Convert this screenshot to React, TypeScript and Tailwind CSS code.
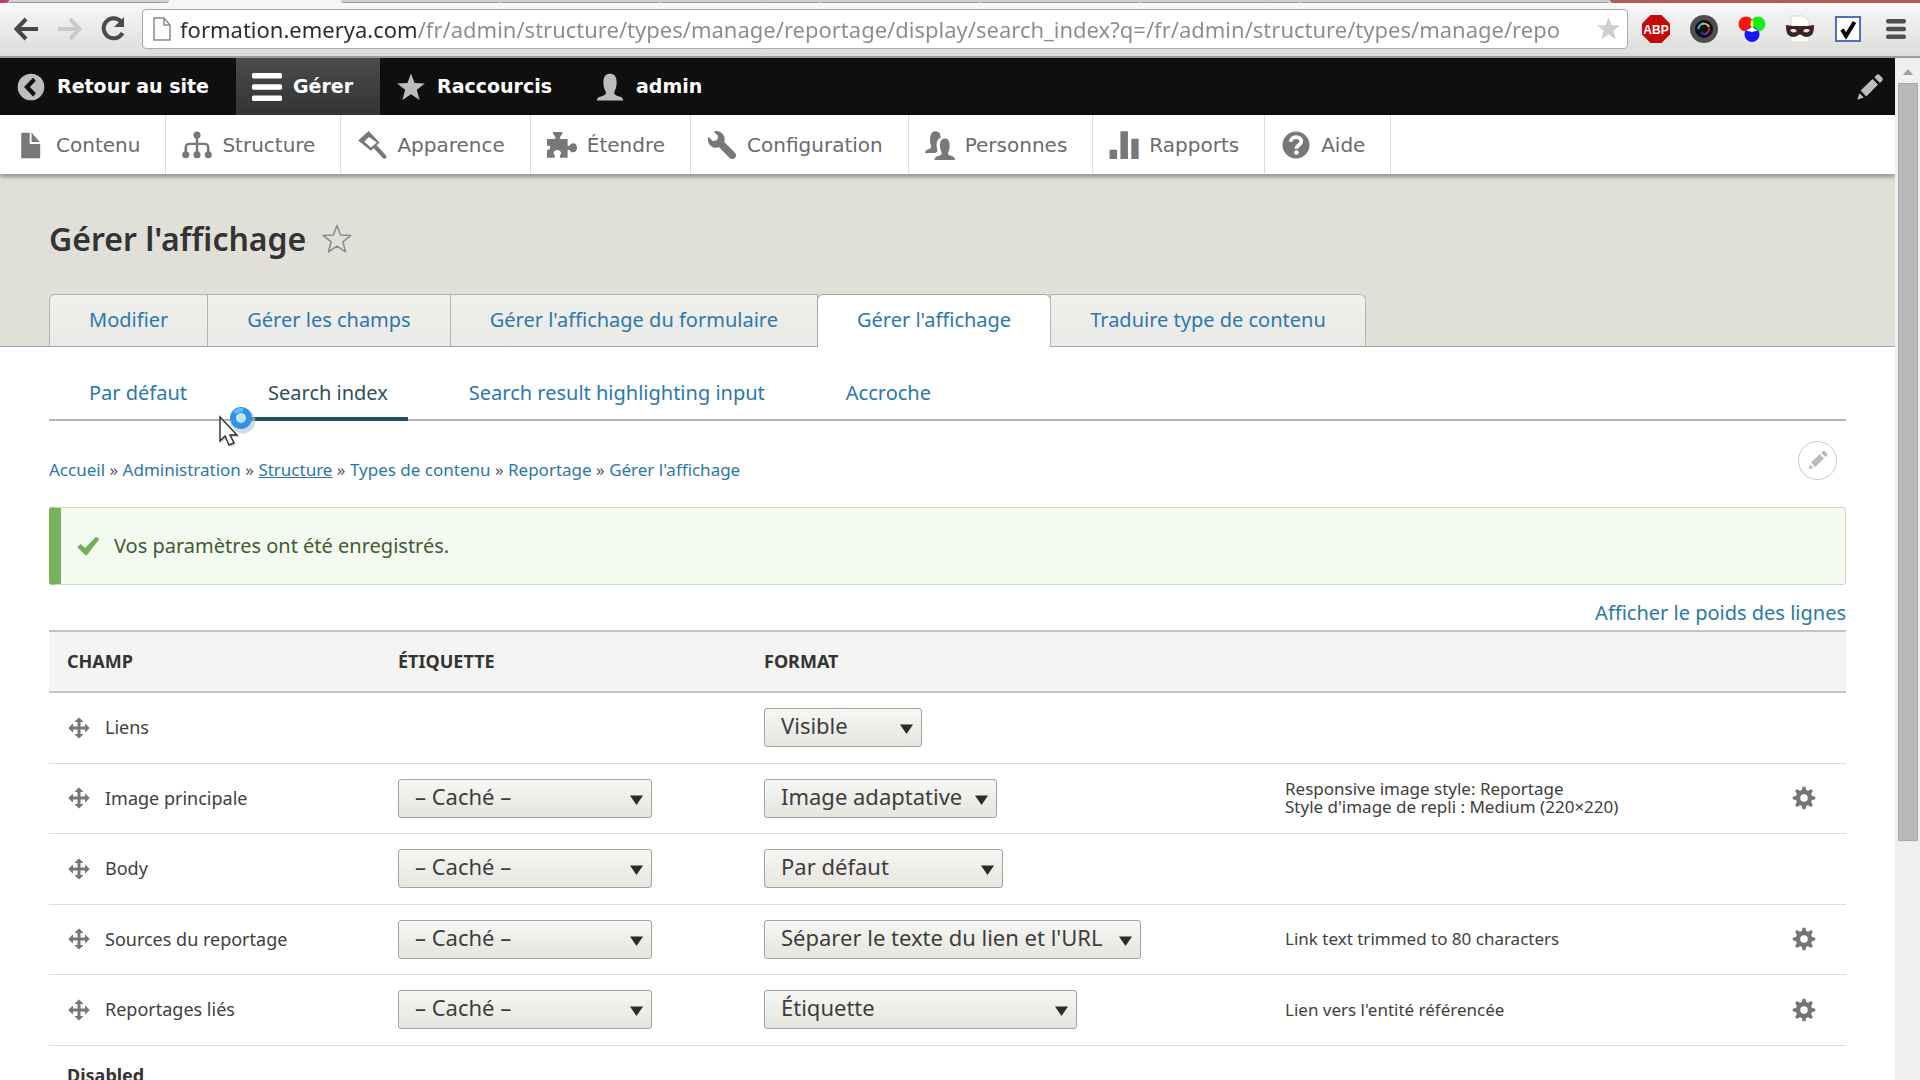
import React, { ReactNode } from "react";

type IconProps = { className?: string };

function Svg({ className, children, viewBox = "0 0 16 16" }: { className?: string; children: ReactNode; viewBox?: string }) {
  return (
    <svg viewBox={viewBox} className={className} fill="currentColor" aria-hidden="true">
      {children}
    </svg>
  );
}

const STAR = "M8 0.8 9.9 5.9 15.4 6.1 11.1 9.5 12.6 14.9 8 11.8 3.4 14.9 4.9 9.5 0.6 6.1 6.1 5.9Z";

const StarIcon = ({ className }: IconProps) => (
  <Svg className={className}>
    <path d={STAR} />
  </Svg>
);

const StarOutline = ({ className }: IconProps) => (
  <Svg className={className}>
    <path d={STAR} fill="none" stroke="currentColor" strokeWidth="0.8" strokeLinejoin="round" />
  </Svg>
);

const BackCircle = ({ className }: IconProps) => (
  <Svg className={className}>
    <path fillRule="evenodd" d="M8 .9a7.1 7.1 0 1 0 0 14.200 7.100 7.100 0 0 0 0-14.200zM10.600 4.700 7.400 8l3.200 3.300-1.500 1.700L4.300 8l4.800-5z" />
  </Svg>
);

const Bars = ({ className }: IconProps) => (
  <Svg className={className}>
    <rect x="0" y="0.500" width="16" height="3" rx="0.800" />
    <rect x="0" y="6.500" width="16" height="3" rx="0.800" />
    <rect x="0" y="12.500" width="16" height="3" rx="0.800" />
  </Svg>
);

const PERSON =
  "M1 15.200c0-1.300.6-1.800 2.200-2.200 1.600-.4 2.600-.8 2.600-1.900 0-.7-.5-1.100-.8-2.200-.4-1.200-.6-2.600-.5-4C4.600 2.200 5.900.9 8 .9s3.400 1.300 3.500 4c.1 1.400-.1 2.800-.5 4-.3 1.100-.8 1.500-.8 2.200 0 1.100 1 1.500 2.600 1.900 1.600.4 2.200.9 2.200 2.200z";

const Person = ({ className }: IconProps) => (
  <Svg className={className}>
    <path d={PERSON} />
  </Svg>
);

const Pencil = ({ className }: IconProps) => (
  <Svg className={className}>
    <path d="M14.500 3 13 1.500c-.4-.4-1-.4-1.400 0l-1.300 1.300 3 3 1.300-1.300c.3-.4.3-1.100-.1-1.500z" />
    <path d="M3 9.900 9.300 3.700l3 3L6 13z" />
    <path d="M2.400 11.300 1.200 14.800l3.500-1.200z" />
  </Svg>
);

const FileIcon = ({ className }: IconProps) => (
  <Svg className={className}>
    <path d="M2.800 1.400h4.500v6h5.600v7.200c0 .3-.2.500-.5.500H3.300a.5.500 0 0 1-.5-.5z" />
    <path d="M8.300 1.300l4.300 5.100H8.300z" />
  </Svg>
);

const StructureIcon = ({ className }: IconProps) => (
  <Svg className={className}>
    <circle cx="8" cy="2.700" r="1.900" />
    <circle cx="2" cy="13.200" r="1.900" />
    <circle cx="8" cy="13.200" r="1.900" />
    <circle cx="14" cy="13.200" r="1.900" />
    <path fill="none" stroke="currentColor" strokeWidth="1.300" d="M8 3v10M2 13v-3.500c0-1.300.8-2.100 2.100-2.100h7.800c1.300 0 2.100.8 2.100 2.100V13" />
  </Svg>
);

const BrushIcon = ({ className }: IconProps) => (
  <Svg className={className}>
    <path fillRule="evenodd" d="M6.200.5 12 6.700 7.400 11 .6 5.600zM6.300 3.700 3.900 6.200l3.500 3.100 3.200-2.700z" />
    <path fill="none" stroke="currentColor" strokeWidth="2.200" strokeLinecap="round" d="M10 9.200l4.600 5" />
  </Svg>
);

const PuzzleIcon = ({ className }: IconProps) => (
  <Svg className={className}>
    <path d="M0 4.800h4.400V3.600L3.200 2V1h5v1L7 3.600v1.200h4v3.600h1.100c.3-.8.900-1.300 1.900-1.300 1.300 0 2 1 2 2.400s-.7 2.400-2 2.400c-1 0-1.600-.5-1.900-1.300H11v4.200H6.900v-1.300c.4-.3.600-.7.600-1.200 0-1-.9-1.700-2-1.700s-2 .7-2 1.700c0 .5.200.9.600 1.200v1.300H0v-4.200c1.300 0 1.600-.6 1.600-1.300S1.300 8.400 0 8.400z" />
  </Svg>
);

const WrenchIcon = ({ className }: IconProps) => (
  <Svg className={className}>
    <path d="M14.900 12.100l-.01-.008v-.001L9.234 6.435c.15-.449.252-.921.252-1.421 0-2.485-2.016-4.500-4.502-4.500-.505 0-.981.102-1.434.255l2.431 2.431-.588 2.196-2.196.588L.752 3.539c-.162.464-.268.956-.268 1.475 0 2.486 2.014 4.500 4.500 4.500.5 0 .972-.102 1.421-.251l5.667 5.665c.781.781 2.047.781 2.828 0s.781-2.047 0-2.828z" />
  </Svg>
);

const PeopleIcon = ({ className }: IconProps) => (
  <Svg className={className}>
    <path d="M0 12.300c0-1.500.9-1.800 1.900-2.100 1-.3 1.400-.6 1.400-1.400 0-.6-.4-1-.5-2C2.500 4.800 2.600.7 5.600.7c2 0 2.700 1.500 2.700 3.400-2 .8-2.500 3-1.800 6.200.2 1 .3 1.500-1.100 2z" />
    <path d="M5.100 16c0-1.300.7-1.700 2-2.100 1.200-.3 1.800-.6 1.800-1.500 0-.6-.4-.9-.6-1.900C7.800 8.200 7.700 4.500 10.600 4.500s2.800 3.700 2.300 6c-.2 1-.6 1.300-.6 1.900 0 .9.600 1.200 1.800 1.500 1.300.4 1.900.8 1.900 2.100z" />
  </Svg>
);

const ChartIcon = ({ className }: IconProps) => (
  <Svg className={className}>
    <path d="M.3 10.500h4v5h-4zM6.100.6h4v14.900h-4zM11.900 4.600h3.900v10.900h-3.900z" />
  </Svg>
);

const HelpIcon = ({ className }: IconProps) => (
  <Svg className={className}>
    <circle cx="8" cy="8" r="7.200" />
    <path fill="none" stroke="#fff" strokeWidth="2" d="M5.200 6.300c0-1.600 1.200-2.500 2.800-2.500s2.800.9 2.800 2.300c0 1.900-2.600 2-2.600 3.900" />
    <circle cx="8.200" cy="12" r="1.200" fill="#fff" />
  </Svg>
);

const MoveIcon = ({ className }: IconProps) => (
  <Svg className={className}>
    <path d="M14.904 7.753l-2.373-2.372c-.291-.292-.529-.193-.529.220v1.399H9V4h1.398c.414 0 .512-.239.221-.530L8.248 1.098c-.137-.136-.360-.136-.497 0L5.379 3.470c-.292.292-.193.530.220.530h1.399v3h-3V5.631c0-.413-.239-.511-.530-.220L1.096 7.783c-.136.136-.136.359 0 .494l2.372 2.372c.291.292.530.192.530-.219V9h3v3H5.598c-.413 0-.511.238-.220.529l2.374 2.373c.137.137.360.137.495 0l2.373-2.373c.290-.291.190-.529-.222-.529H9V9h3v1.400c0 .413.238.511.529.220l2.373-2.374c.137-.135.137-.358.002-.493z" />
  </Svg>
);

const GearIcon = ({ className }: IconProps) => (
  <Svg className={className}>
    <circle cx="8" cy="8" r="4" fill="none" stroke="currentColor" strokeWidth="3" />
    {[0, 45, 90, 135, 180, 225, 270, 315].map((angle) => (
      <path key={angle} d="M6.300 3.600 7.100.5h1.800l.8 3.100z" transform={`rotate(${angle} 8 8)`} />
    ))}
  </Svg>
);

const CheckIcon = ({ className }: IconProps) => (
  <Svg className={className}>
    <path d="M6.500 14.300.8 8.900l2.300-2.300 3 2.800 7.200-7.600 2.300 1.600-8.200 10.600z" />
  </Svg>
);

function BrowserTabs() {
  return (
    <div className="flex h-[3px] shrink-0 bg-[#f4f4f4]">
      <div className="w-[9px] rounded-br bg-[#b5475a]" />
      <div className="w-[160px] rounded-br border-b border-[#9a9a9a] bg-[#d2d2d0]" />
      <div className="w-[172px]" />
      <div className="w-[158px] rounded-bl border-b border-[#9a9a9a] bg-[#cfcfcd]" />
      <div className="w-[160px] rounded-bl border-b border-[#9a9a9a] bg-[#cfcfcd]" />
      <div className="w-[160px] rounded-bl border-b border-[#9a9a9a] bg-[#cfcfcd]" />
      <div className="w-[160px] rounded-bl border-b border-[#9a9a9a] bg-[#cfcfcd]" />
      <div className="w-[160px] rounded-bl border-b border-[#9a9a9a] bg-[#cfcfcd]" />
      <div className="w-[160px] rounded-bl border-b border-[#9a9a9a] bg-[#cfcfcd]" />
      <div className="w-[311px] rounded-b border-b border-[#9a9a9a] bg-[#cfcfcd]" />
      <div className="grow rounded-bl bg-[#b35b54]" />
    </div>
  );
}

function BrowserBar() {
  return (
    <div className="flex h-[55px] shrink-0 items-center border-b-2 border-[#9d9d9b] bg-linear-to-b from-[#f8f8f8] to-[#dcdcdb] pr-[14px] pb-[2px] pl-[13px]">
      <button aria-label="Page précédente" className="w-[44px]">
        <svg viewBox="0 0 26 26" className="size-[26px]" fill="none" stroke="#474747" strokeWidth="4" aria-hidden="true">
          <path d="M25 13H4M13 3 3.500 13 13 23" />
        </svg>
      </button>
      <button aria-label="Page suivante" className="w-[43px]">
        <svg viewBox="0 0 26 26" className="size-[26px]" fill="none" stroke="#c9c9c9" strokeWidth="4" aria-hidden="true">
          <path d="M1 13h21M13 3l9.500 10L13 23" />
        </svg>
      </button>
      <button aria-label="Actualiser" className="w-[42px]">
        <svg viewBox="0 0 26 26" className="size-[26px]" fill="none" stroke="#4b4b4b" strokeWidth="4" aria-hidden="true">
          <path d="M21 5.500A10 10 0 1 0 22.500 17" />
          <path d="M24 1v10H14z" fill="#4b4b4b" stroke="none" />
        </svg>
      </button>
      <div className="flex h-[40px] grow items-center rounded border border-[#a9a9a9] bg-white pr-[6px] pl-[10px]">
        <svg viewBox="0 0 18 24" className="h-6 w-[18px] shrink-0" fill="#fcfcfc" stroke="#8b8b8b" strokeWidth="1.500" aria-hidden="true">
          <path d="M1 1h10l6 7v15H1zM11 1v7h6" />
        </svg>
        <input
          aria-label="Adresse"
          readOnly
          defaultValue="formation.emerya.com/fr/admin/structure/types/manage/reportage/display/search_index?q=/fr/admin/structure/types/manage/repo"
          className="ml-[9px] min-w-0 grow bg-linear-to-r from-[#2b2b33] from-[236px] to-[#8c8c8c] to-[236px] bg-clip-text font-['Noto_Sans','Open_Sans',sans-serif] text-[22px] leading-8 text-transparent outline-none"
        />
        <button aria-label="Ajouter aux favoris" className="shrink-0">
          <StarIcon className="size-[25px] text-[#cfcfcf]" />
        </button>
      </div>
      <div className="ml-[14px] flex shrink-0 items-center gap-[20px]">
        <button aria-label="Adblock Plus">
          <svg viewBox="0 0 28 28" className="size-7" aria-hidden="true">
            <path d="M8.500 0h11L28 8.500v11L19.500 28h-11L0 19.500v-11z" fill="#c9080b" />
            <text x="14" y="18.500" textAnchor="middle" fill="#fff" fontSize="12" fontWeight="700" fontFamily="Liberation Sans, sans-serif">
              ABP
            </text>
          </svg>
        </button>
        <button aria-label="Capture">
          <svg viewBox="0 0 28 28" className="size-7" aria-hidden="true">
            <circle cx="14" cy="14" r="14" fill="#4d4f52" />
            <circle cx="14" cy="14" r="9" fill="#101014" />
            <path d="M8.500 14A5.500 5.500 0 0 1 14 8.500" fill="none" stroke="#27c7e8" strokeWidth="2" />
            <path d="M12 9A5.500 5.500 0 0 1 19 12" fill="none" stroke="#e6c52c" strokeWidth="2" />
            <path d="M19 13a5.500 5.500 0 0 1-4 6" fill="none" stroke="#c01f7c" strokeWidth="2" />
            <path d="M11 17.500a5 5 0 0 0 4 1.500" fill="none" stroke="#263ec4" strokeWidth="2" />
          </svg>
        </button>
        <button aria-label="Couleurs">
          <svg viewBox="0 0 28 28" className="size-7" aria-hidden="true">
            <circle cx="8" cy="9" r="7.500" fill="#ff1414" />
            <circle cx="20" cy="9" r="7.500" fill="#16f016" />
            <circle cx="14" cy="19.500" r="7.500" fill="#1616f5" />
            <path d="M14 4.500a7.500 7.500 0 0 1 1.400 6l-1.400 3-1.400-3a7.500 7.500 0 0 1 1.400-6z" fill="#fff34d" />
            <path d="M14 12 8 15.500l6 1.500 6-1.500z" fill="#fff" />
          </svg>
        </button>
        <button aria-label="Navigation masquée">
          <svg viewBox="0 0 28 28" className="size-7" aria-hidden="true">
            <path d="M5 1h13l5 5v21H5z" fill="#fdfdfb" stroke="#d8d8d0" />
            <path d="M0 10c5 1 9 1 14 1s9 0 14-1c0 7-1 12-8 12-3 0-4-2.500-6-2.500S11 22 8 22C1 22 0 17 0 10z" fill="#3d2525" />
            <path d="M4 15.500c2-2 5-2 7 .5-2 2-5 2-7-.5zM17 16c2-2.500 5-2.500 7-.5-2 2.500-5 2.500-7 .5z" fill="#eadfdd" />
          </svg>
        </button>
        <button aria-label="Tâches">
          <svg viewBox="0 0 28 28" className="size-7" aria-hidden="true">
            <rect x="2" y="2" width="24" height="24" fill="#fff" stroke="#4b74b8" strokeWidth="2" />
            <path d="M8 14.500l4 6.500L20.500 7" fill="none" stroke="#000" strokeWidth="4" />
          </svg>
        </button>
        <button aria-label="Menu du navigateur" className="pl-1">
          <svg viewBox="0 0 20 20" className="size-5" fill="#505050" aria-hidden="true">
            <rect width="20" height="4.500" rx="2" />
            <rect y="7.700" width="20" height="4.500" rx="2" />
            <rect y="15.400" width="20" height="4.500" rx="2" />
          </svg>
        </button>
      </div>
    </div>
  );
}

const barItems = [
  { label: "Retour au site", icon: <BackCircle className="size-[30px] text-[#bdbdbd]" />, active: false },
  { label: "Gérer", icon: <Bars className="size-[30px] text-white" />, active: true },
  { label: "Raccourcis", icon: <StarIcon className="size-[30px] text-[#bdbdbd]" />, active: false },
  { label: "admin", icon: <Person className="size-[30px] text-[#bdbdbd]" />, active: false },
];

const trayItems = [
  { label: "Contenu", icon: <FileIcon className="size-[30px]" /> },
  { label: "Structure", icon: <StructureIcon className="size-[30px]" /> },
  { label: "Apparence", icon: <BrushIcon className="size-[30px]" /> },
  { label: "Étendre", icon: <PuzzleIcon className="size-[30px]" /> },
  { label: "Configuration", icon: <WrenchIcon className="size-[30px]" /> },
  { label: "Personnes", icon: <PeopleIcon className="size-[30px]" /> },
  { label: "Rapports", icon: <ChartIcon className="size-[30px]" /> },
  { label: "Aide", icon: <HelpIcon className="size-[30px]" /> },
];

function AdminToolbar() {
  return (
    <div className="relative z-10 shrink-0 font-['DejaVu_Sans',Verdana,sans-serif]">
      <nav aria-label="Barre d'outils" className="flex h-[57px] bg-[#0f0f0f]">
        {barItems.map((item) => (
          <a
            key={item.label}
            href="#"
            className={
              item.active
                ? "flex items-center gap-[11px] bg-linear-to-b from-[#4b4b4b] to-[#343434] pr-[27px] pl-4 text-[19px] font-bold text-white"
                : "flex items-center gap-[11px] pr-[27px] pl-4 text-[19px] font-bold text-white"
            }
          >
            {item.icon}
            {item.label}
          </a>
        ))}
        <button aria-label="Modifier" className="mr-[10px] ml-auto">
          <Pencil className="size-[30px] text-[#bdbdbd]" />
        </button>
      </nav>
      <nav aria-label="Administration" className="flex h-[60px] border-b border-[#a5a59f] bg-white shadow-[0_2px_4px_rgba(0,0,0,0.35)]">
        {trayItems.map((item) => (
          <a
            key={item.label}
            href="#"
            className="flex items-center gap-[10px] border-r border-[#dddddd] pr-[25px] pl-4 text-[20px] text-[#6b6b6b]"
          >
            <span className="text-[#787878]">{item.icon}</span>
            {item.label}
          </a>
        ))}
      </nav>
    </div>
  );
}

const tab = "-mr-px border border-b-0 border-[#b4b4ac] bg-linear-to-b from-[#f0f0ec] to-[#e9e9e7] px-[39px] text-[20px] leading-[50px] text-[#2b78b0] h-[52px]";

function PageHeader() {
  return (
    <header className="shrink-0 border-b border-[#a6a6a0] bg-[#e0e0d8] px-[49px]">
      <div className="flex h-[119px] items-center gap-4 pt-2">
        <h1 className="text-[32px] font-semibold text-[#333333]">Gérer l'affichage</h1>
        <button aria-label="Ajouter aux raccourcis">
          <StarOutline className="size-[30px] text-[#8b8b86]" />
        </button>
      </div>
      <nav aria-label="Onglets principaux" className="-mb-px flex">
        <a href="#" className={tab + " rounded-tl-md border-b"}>
          Modifier
        </a>
        <a href="#" className={tab + " border-b"}>
          Gérer les champs
        </a>
        <a href="#" className={tab + " border-b"}>
          Gérer l'affichage du formulaire
        </a>
        <a
          href="#"
          aria-current="page"
          className="-mr-px h-[53px] rounded-t-md border border-b-0 border-[#a6a6a0] bg-white px-[39px] text-[20px] leading-[50px] text-[#2b78b0]"
        >
          Gérer l'affichage
        </a>
        <a href="#" className={tab + " rounded-tr-md border-b"}>
          Traduire type de contenu
        </a>
      </nav>
    </header>
  );
}

function SecondaryTabs() {
  const link = "px-5 pt-7 leading-[36px] h-[72px]";
  return (
    <nav aria-label="Onglets secondaires" className="relative flex gap-[41px] border-b-2 border-[#b3b3b3] pl-5 text-[20px] text-[#2b78b0]">
      <a href="#" className={link}>
        Par défaut
      </a>
      <a href="#" aria-current="page" className="-mb-[2px] h-[74px] border-b-4 border-[#1d4f5c] px-5 pt-7 leading-[36px] text-[#2d4f5c]">
        Search index
      </a>
      <a href="#" className={link}>
        Search result highlighting input
      </a>
      <a href="#" className={link}>
        Accroche
      </a>
      <svg viewBox="0 0 42 50" className="absolute top-[58px] left-[169px] h-[50px] w-[42px]" aria-hidden="true">
        <circle cx="25" cy="16" r="9" fill="none" stroke="#b9c3cc" strokeWidth="7" opacity="0.6" />
        <circle cx="23" cy="13" r="8" fill="#bfe6f8" stroke="#2f92e8" strokeWidth="6" />
        <path d="M17 8a8 8 0 0 1 8-3" fill="none" stroke="#5fc0f5" strokeWidth="4" />
        <path d="M4 14v24l5-5 4 9 5-2-4-8h7z" fill="#8a8a8a" opacity="0.35" />
        <path d="M2 12v24l5-5 4 9 5-2-4-8h7z" fill="#fff" stroke="#2b2b2b" strokeWidth="1.400" />
      </svg>
    </nav>
  );
}

const crumbs = ["Accueil", "Administration", "Structure", "Types de contenu", "Reportage", "Gérer l'affichage"];

function Breadcrumb() {
  return (
    <div className="flex h-[86px] items-center justify-between pt-[12px]">
      <nav aria-label="Fil d'Ariane" className="text-[17px] text-[#555555]">
        {crumbs.map((crumb, index) => (
          <React.Fragment key={crumb}>
            {index > 0 && <span> » </span>}
            <a href="#" className={crumb === "Structure" ? "text-[#2b78a8] underline" : "text-[#2b78a8]"}>
              {crumb}
            </a>
          </React.Fragment>
        ))}
      </nav>
      <button
        aria-label="Ouvrir les options de configuration"
        className="mr-[9px] mb-[20px] flex size-[39px] items-center justify-center rounded-full border border-[#c8c8c8] bg-white"
      >
        <Pencil className="size-[22px] text-[#bababa]" />
      </button>
    </div>
  );
}

function SelectBox({ label, value, width }: { label: string; value: string; width: string }) {
  return (
    <span className={"relative inline-block align-middle " + width}>
      <select
        aria-label={label}
        defaultValue={value}
        className="h-[39px] w-full appearance-none rounded-[3px] border border-[#a3a39f] bg-linear-to-b from-[#f6f6f3] to-[#e6e6df] pb-[5px] pl-4 text-[22px] leading-8 text-[#3d3d3d]"
      >
        <option value={value}>{value}</option>
      </select>
      <svg viewBox="0 0 13 10" className="pointer-events-none absolute top-[16px] right-[9px] h-[10px] w-[13px]" fill="#2b2b2b" aria-hidden="true">
        <path d="M0 0.500h13L6.500 10z" />
      </svg>
    </span>
  );
}

const rows: { name: string; hidden: boolean; format: string; width: string; summary: string[] }[] = [
  { name: "Liens", hidden: false, format: "Visible", width: "w-[158px]", summary: [] },
  {
    name: "Image principale",
    hidden: true,
    format: "Image adaptative",
    width: "w-[233px]",
    summary: ["Responsive image style: Reportage", "Style d'image de repli : Medium (220×220)"],
  },
  { name: "Body", hidden: true, format: "Par défaut", width: "w-[239px]", summary: [] },
  { name: "Sources du reportage", hidden: true, format: "Séparer le texte du lien et l'URL", width: "w-[377px]", summary: ["Link text trimmed to 80 characters"] },
  { name: "Reportages liés", hidden: true, format: "Étiquette", width: "w-[313px]", summary: ["Lien vers l'entité référencée"] },
];

function FieldTable() {
  return (
    <table className="w-full table-fixed border-collapse text-left text-[18px] text-[#404040]">
      <colgroup>
        <col className="w-[331px]" />
        <col className="w-[366px]" />
        <col className="w-[521px]" />
        <col />
        <col className="w-[80px]" />
      </colgroup>
      <thead>
        <tr className="h-[61px] border-y-2 border-[#c4c4c0] bg-[#f4f4f2] text-[#333333]">
          <th className="pl-[18px] font-bold">CHAMP</th>
          <th className="pl-[18px] font-bold">ÉTIQUETTE</th>
          <th className="pl-[18px] font-bold">FORMAT</th>
          <td />
          <td />
        </tr>
      </thead>
      <tbody>
        {rows.map((row) => (
          <tr key={row.name} className="border-b border-[#dedede] odd:h-[71px] even:h-[70px]">
            <td className="pl-[18px]">
              <span className="flex items-center gap-[14px]">
                <button aria-label={"Déplacer " + row.name}>
                  <MoveIcon className="block size-6 text-[#777777]" />
                </button>
                {row.name}
              </span>
            </td>
            <td className="pl-[18px]">
              {row.hidden && <SelectBox label={"Étiquette de " + row.name} value="– Caché –" width="w-[254px]" />}
            </td>
            <td className="pl-[18px]">
              <SelectBox label={"Format de " + row.name} value={row.format} width={row.width} />
            </td>
            <td className="pl-[18px] text-[17px] leading-[18px]">
              {row.summary.map((line) => (
                <div key={line}>{line}</div>
              ))}
            </td>
            <td>
              {row.summary.length > 0 && (
                <button aria-label={"Configurer " + row.name} className="ml-[26px] block">
                  <GearIcon className="block size-6 text-[#757575]" />
                </button>
              )}
            </td>
          </tr>
        ))}
        <tr className="h-[60px]">
          <td colSpan={5} className="pl-[18px] font-bold text-[#333333]">
            Disabled
          </td>
        </tr>
      </tbody>
    </table>
  );
}

export default function App() {
  return (
    <div className="flex h-screen flex-col overflow-hidden bg-white font-['Noto_Sans','Open_Sans',sans-serif]">
      <BrowserTabs />
      <BrowserBar />
      <div className="flex min-h-0 grow">
        <div className="flex min-w-0 grow flex-col overflow-hidden">
          <AdminToolbar />
          <PageHeader />
          <main className="px-[49px]">
            <SecondaryTabs />
            <Breadcrumb />
            <div
              role="status"
              className="flex h-[78px] items-center gap-[14px] rounded-[3px] border border-l-[12px] border-[#cfd8c8] border-l-[#77b159] bg-[#f3faef] pl-[15px] text-[20px] text-[#3f5b30]"
            >
              <CheckIcon className="size-[24px] text-[#6fb155]" />
              Vos paramètres ont été enregistrés.
            </div>
            <div className="flex h-[45px] items-end justify-end text-[20px] leading-[34px] text-[#2b78a8]">
              <button>Afficher le poids des lignes</button>
            </div>
            <FieldTable />
          </main>
        </div>
        <div className="flex w-[25px] shrink-0 flex-col items-center bg-[#f0f0f0] pt-[11px]">
          <svg viewBox="0 0 12 7" className="h-[6px] w-3" fill="#9f9f9f" aria-hidden="true">
            <path d="M6 0l6 7H0z" />
          </svg>
          <div className="mt-[8px] h-[75%] w-5 border border-[#a8a8a8] bg-[#bababa]" />
        </div>
      </div>
    </div>
  );
}
